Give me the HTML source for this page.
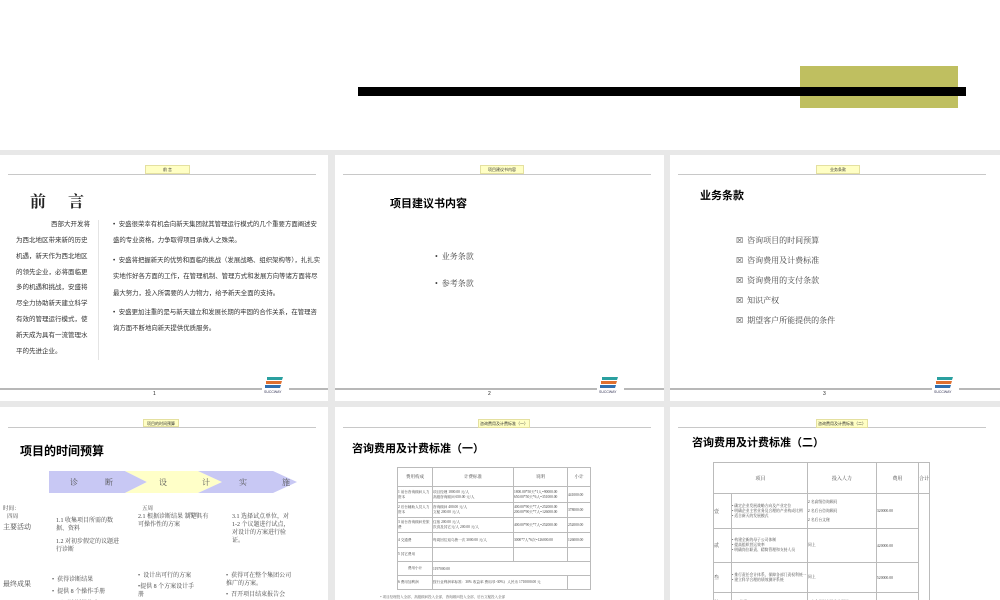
<!DOCTYPE html>
<html><head><meta charset="utf-8"><style>
*{margin:0;padding:0;box-sizing:border-box}
body{width:1000px;height:600px;overflow:hidden;background:#fff;position:relative;font-family:"Liberation Sans","Noto Sans CJK SC",sans-serif;color:#222}
.a{position:absolute}
.slide{position:absolute;background:#fff;overflow:hidden}
.tab{position:absolute;background:#ffffc4;border:1px solid #e4e0a0;font-size:4px;text-align:center;line-height:8px;color:#333}
.hl{position:absolute;height:1px;background:#c8c8c8}
.fl{position:absolute;height:2px;background:#b8b8b8}
.serif{font-family:"Liberation Serif","Noto Serif CJK SC",serif}
.t{white-space:nowrap}
table{border-collapse:collapse;position:absolute}
td{border:1px solid #bbb;font-family:"Liberation Serif","Noto Serif CJK SC",serif;color:#444}
</style></head><body>
<div class="a" style="left:800px;top:66px;width:158px;height:42px;background:#bfbf60"></div>
<div class="a" style="left:358px;top:87px;width:608px;height:9px;background:#000"></div>
<div class="a" style="left:0;top:150px;width:1000px;height:450px;background:#e8e8e8"></div>

<!-- slide 1 -->
<div class="slide" style="left:0;top:155px;width:328px;height:246px">
<div class="hl" style="left:8px;top:19px;width:308px"></div>
<div class="tab" style="left:145px;top:10px;width:45px;height:9px">前 言</div>
<div class="a t serif" style="left:30px;top:34px;font-size:16px;font-weight:bold;letter-spacing:22px">前言</div>
<div class="a t" style="left:16px;top:62px;width:74px;font-size:6.5px;line-height:16px;color:#333;text-align:right"><div>西部大开发将</div></div>
<div class="a t" style="left:16px;top:78px;font-size:6.5px;line-height:15.8px;color:#333">为西北地区带来新的历史<br>机遇，新天作为西北地区<br>的领先企业，必将面临更<br>多的机遇和挑战，安盛将<br>尽全力协助新天建立科学<br>有效的管理运行模式，使<br>新天成为具有一流管理水<br>平的先进企业。</div>
<div class="a" style="left:98px;top:65px;width:1px;height:140px;background:#e4e4e4"></div>
<div class="a" style="left:113px;top:62px;width:210px;font-size:6.4px;line-height:16.4px;color:#333">• &nbsp;安盛很荣幸有机会向新天集团就其管理运行模式的几个重要方面阐述安盛的专业资格，力争取得项目承做人之殊荣。<div style="height:3px"></div>• &nbsp;安盛将把握新天的优势和面临的挑战（发展战略、组织架构等），扎扎实实地作好各方面的工作，在管理机制、管理方式和发展方向等诸方面将尽最大努力，投入所需要的人力物力，给予新天全面的支持。<div style="height:3px"></div>• &nbsp;安盛更加注重的是与新天建立和发展长期的牢固的合作关系，在管理咨询方面不断地向新天提供优质服务。</div>
<div class="fl" style="left:0;top:233px;width:262px"></div><div class="fl" style="left:289px;top:233px;width:39px"></div>
<svg class="a" style="left:264px;top:221px" width="22" height="18"><path d="M3 1h16l-1 3H3z" fill="#2aa0a0"/><path d="M2 5h16l-1 3H2z" fill="#e07030"/><path d="M1 9h16l-1 3H1z" fill="#3070b0"/><text x="0" y="17" font-size="3.5" fill="#335">SUCCWAY</text></svg>
<div class="a" style="left:153px;top:236px;font-size:5px">1</div>
</div>

<!-- slide 2 -->
<div class="slide" style="left:335px;top:155px;width:329px;height:246px">
<div class="hl" style="left:8px;top:19px;width:308px"></div>
<div class="tab" style="left:145px;top:10px;width:44px;height:9px">项目建议书内容</div>
<div class="a t" style="left:55px;top:40px;font-size:11px;font-weight:bold;color:#000">项目建议书内容</div>
<div class="a t serif" style="left:100px;top:96px;font-size:8px;color:#444">• &nbsp;业务条款</div>
<div class="a t serif" style="left:100px;top:123px;font-size:8px;color:#444">• &nbsp;参考条款</div>
<div class="fl" style="left:0;top:233px;width:262px"></div><div class="fl" style="left:289px;top:233px;width:40px"></div>
<svg class="a" style="left:264px;top:221px" width="22" height="18"><path d="M3 1h16l-1 3H3z" fill="#2aa0a0"/><path d="M2 5h16l-1 3H2z" fill="#e07030"/><path d="M1 9h16l-1 3H1z" fill="#3070b0"/><text x="0" y="17" font-size="3.5" fill="#335">SUCCWAY</text></svg>
<div class="a" style="left:153px;top:236px;font-size:5px">2</div>
</div>

<!-- slide 3 -->
<div class="slide" style="left:670px;top:155px;width:330px;height:246px">
<div class="hl" style="left:8px;top:19px;width:308px"></div>
<div class="tab" style="left:146px;top:10px;width:44px;height:9px">业务条款</div>
<div class="a t" style="left:30px;top:32px;font-size:11px;font-weight:bold;color:#000">业务条款</div>
<div class="a serif" style="left:66px;top:76px;font-size:8px;line-height:20px;color:#444">☒ &nbsp;咨询项目的时间预算<br>☒ &nbsp;咨询费用及计费标准<br>☒ &nbsp;资询费用的支付条款<br>☒ &nbsp;知识产权<br>☒ &nbsp;期望客户所能提供的条件</div>
<div class="fl" style="left:0;top:233px;width:262px"></div><div class="fl" style="left:289px;top:233px;width:41px"></div>
<svg class="a" style="left:264px;top:221px" width="22" height="18"><path d="M3 1h16l-1 3H3z" fill="#2aa0a0"/><path d="M2 5h16l-1 3H2z" fill="#e07030"/><path d="M1 9h16l-1 3H1z" fill="#3070b0"/><text x="0" y="17" font-size="3.5" fill="#335">SUCCWAY</text></svg>
<div class="a" style="left:153px;top:236px;font-size:5px">3</div>
</div>

<!-- slide 4 -->
<div class="slide" style="left:0;top:407px;width:328px;height:193px">
<div class="hl" style="left:8px;top:20px;width:308px"></div>
<div class="tab" style="left:143px;top:12px;width:36px;height:8px">项目的时间预算</div>
<div class="a t" style="left:20px;top:35px;font-size:12px;font-weight:bold;color:#000">项目的时间预算</div>
<svg class="a" style="left:0;top:0" width="328" height="193">
<polygon points="49,64 125,64 147,75 125,86 49,86" fill="#c8c8f4"/>
<polygon points="125,64 198,64 222,75 198,86 125,86 147,75" fill="#ffffc8"/>
<polygon points="198,64 273,64 297,75 273,86 198,86 222,75" fill="#c8c8f4"/>
</svg>
<div class="a t serif" style="left:70px;top:70px;font-size:8px;color:#555">诊</div>
<div class="a t serif" style="left:105px;top:70px;font-size:8px;color:#555">断</div>
<div class="a t serif" style="left:159px;top:70px;font-size:8px;color:#555">设</div>
<div class="a t serif" style="left:202px;top:70px;font-size:8px;color:#555">计</div>
<div class="a t serif" style="left:239px;top:70px;font-size:8px;color:#555">实</div>
<div class="a t serif" style="left:282px;top:70px;font-size:8px;color:#555">施</div>
<div class="a serif" style="left:3px;top:98px;font-size:5.5px;line-height:8px;color:#444">时间：<br>&nbsp;&nbsp;&nbsp;四周</div>
<div class="a t serif" style="left:142px;top:97px;font-size:5.5px;color:#444">五周</div>
<div class="a t serif" style="left:188px;top:104px;font-size:5.5px;color:#444">四周</div>
<div class="a t serif" style="left:3px;top:115px;font-size:7px;color:#444">主要活动</div>
<div class="a serif" style="left:56px;top:110px;width:66px;font-size:6px;line-height:8px;color:#444">1.1 收集项目所需的数据、资料<div style="height:5px"></div>1.2 对初步假定的议题进行诊断</div>
<div class="a serif" style="left:138px;top:106px;width:72px;font-size:6px;line-height:8px;color:#444">2.1 根据诊断结果 制定具有可操作性的方案</div>
<div class="a serif" style="left:232px;top:106px;width:62px;font-size:6px;line-height:8px;color:#444">3.1 选择试点单位，对 1-2 个议题进行试点，对设计的方案进行验证。</div>
<div class="a t serif" style="left:3px;top:172px;font-size:7px;color:#444">最终成果</div>
<div class="a serif" style="left:52px;top:167px;font-size:6px;line-height:12px;color:#444">• &nbsp;获得诊断结果<br>• &nbsp;提供 8 个操作手册<br>• &nbsp;召开诊断报告会</div>
<div class="a serif" style="left:138px;top:165px;width:60px;font-size:6px;line-height:8px;color:#444">• &nbsp;设计出可行的方案<div style="height:3px"></div>•提供 8 个方案设计手册</div>
<div class="a serif" style="left:226px;top:165px;width:70px;font-size:6px;line-height:8px;color:#444">• &nbsp;获得可在整个集团公司推广的方案。<div style="height:3px"></div>• &nbsp;召开项目结束报告会</div>
</div>

<!-- slide 5 -->
<div class="slide" style="left:335px;top:407px;width:329px;height:193px">
<div class="hl" style="left:8px;top:20px;width:308px"></div>
<div class="tab" style="left:143px;top:12px;width:52px;height:9px">咨询费用及计费标准（一）</div>
<div class="a t" style="left:17px;top:33px;font-size:11px;font-weight:bold;color:#000">咨询费用及计费标准（一）</div>
<table style="left:62px;top:60px;width:194px;font-size:3.6px">
<tr style="height:19px"><td style="width:35px;text-align:center;font-size:4.5px">费用构成</td><td style="width:81px;text-align:center;font-size:4.5px">计费标准</td><td style="width:54px;text-align:center;font-size:4.5px">说明</td><td style="text-align:center;font-size:4.5px">小计</td></tr>
<tr style="height:16px"><td>1 前台咨询顾问人力资本</td><td>项目经理 1800.00 元/人<br>高级咨询顾问 650.00 元/人</td><td>1800.00*50天*1人=90000.00<br>650.00*50天*6人=351000.00</td><td>441000.00</td></tr>
<tr style="height:15px"><td>2 后台辅助人员人力资本</td><td>咨询顾问 400.00 元/人<br>文秘 200.00 元/人</td><td>400.00*90天*7人=252000.00<br>200.00*90天*7人=126000.00</td><td>378000.00</td></tr>
<tr style="height:15px"><td>3 前台咨询顾问差旅费</td><td>住宿 200.00 元/人<br>饮食及其它元/人 200.00 元/人</td><td>400.00*90天*7人=252000.00</td><td>252000.00</td></tr>
<tr style="height:15px"><td>4 交通费</td><td>每周回往返乌鲁一次 3000.00 元/人</td><td>3000*7人*6次=126000.00</td><td>126000.00</td></tr>
<tr style="height:14px"><td>5 其它费用</td><td></td><td></td><td></td></tr>
<tr style="height:14px"><td style="text-align:center">费用小计</td><td colspan="3">1197000.00</td></tr>
<tr style="height:14px"><td>6 费用加利润</td><td colspan="2">按行业利润率标准：30% 收益率 费用/(1-30%) &nbsp;&nbsp;人民币 1710000.00 元</td><td></td></tr>
</table>
<div class="a t serif" style="left:45px;top:188px;font-size:3.5px;color:#555">* 项目经理投入全部，高级顾问投入全部，咨询顾问投入全部，后台文秘投入全部</div>
</div>

<!-- slide 6 -->
<div class="slide" style="left:670px;top:407px;width:330px;height:193px">
<div class="hl" style="left:8px;top:20px;width:308px"></div>
<div class="tab" style="left:146px;top:12px;width:52px;height:9px">咨询费用及计费标准（二）</div>
<div class="a t" style="left:22px;top:27px;font-size:11px;font-weight:bold;color:#000">咨询费用及计费标准（二）</div>
<table style="left:43px;top:55px;width:217px;font-size:3.8px">
<tr style="height:31px"><td colspan="2" style="width:80px;text-align:center;font-size:5px">项目</td><td style="width:69px;text-align:center;font-size:5px">投入人力</td><td style="width:42px;text-align:center;font-size:5px">费用</td><td style="text-align:center;font-size:5px">合计</td></tr>
<tr style="height:35px"><td style="width:18px;font-size:5px">壹</td><td>• 确定企业发展战略方向及产业定位<br>• 明确企业主营业务及合理的产业构成比例<br>• 适合新天的发展模式</td><td>2 名高级咨询顾问<br><br>2 名后台咨询顾问<br><br>2 名后台文秘</td><td>320000.00</td><td rowspan="4"></td></tr>
<tr style="height:34px"><td style="font-size:5px">贰</td><td>• 构建全新的母子公司体制<br>• 提高组织营运效率<br>• 明确岗位职责、精简管理和支持人员</td><td>同上</td><td>420000.00</td></tr>
<tr style="height:30px"><td style="font-size:5px">叁</td><td>• 推行责任会计体系，保障各部门责权利统一<br>• 建立科学合理的绩效测评系统</td><td>同上</td><td>520000.00</td></tr>
<tr style="height:20px"><td style="font-size:5px">肆</td><td>• MI 构建</td><td>1 名全日制高级咨询顾问</td><td></td></tr>
</table>
</div>
</body></html>
